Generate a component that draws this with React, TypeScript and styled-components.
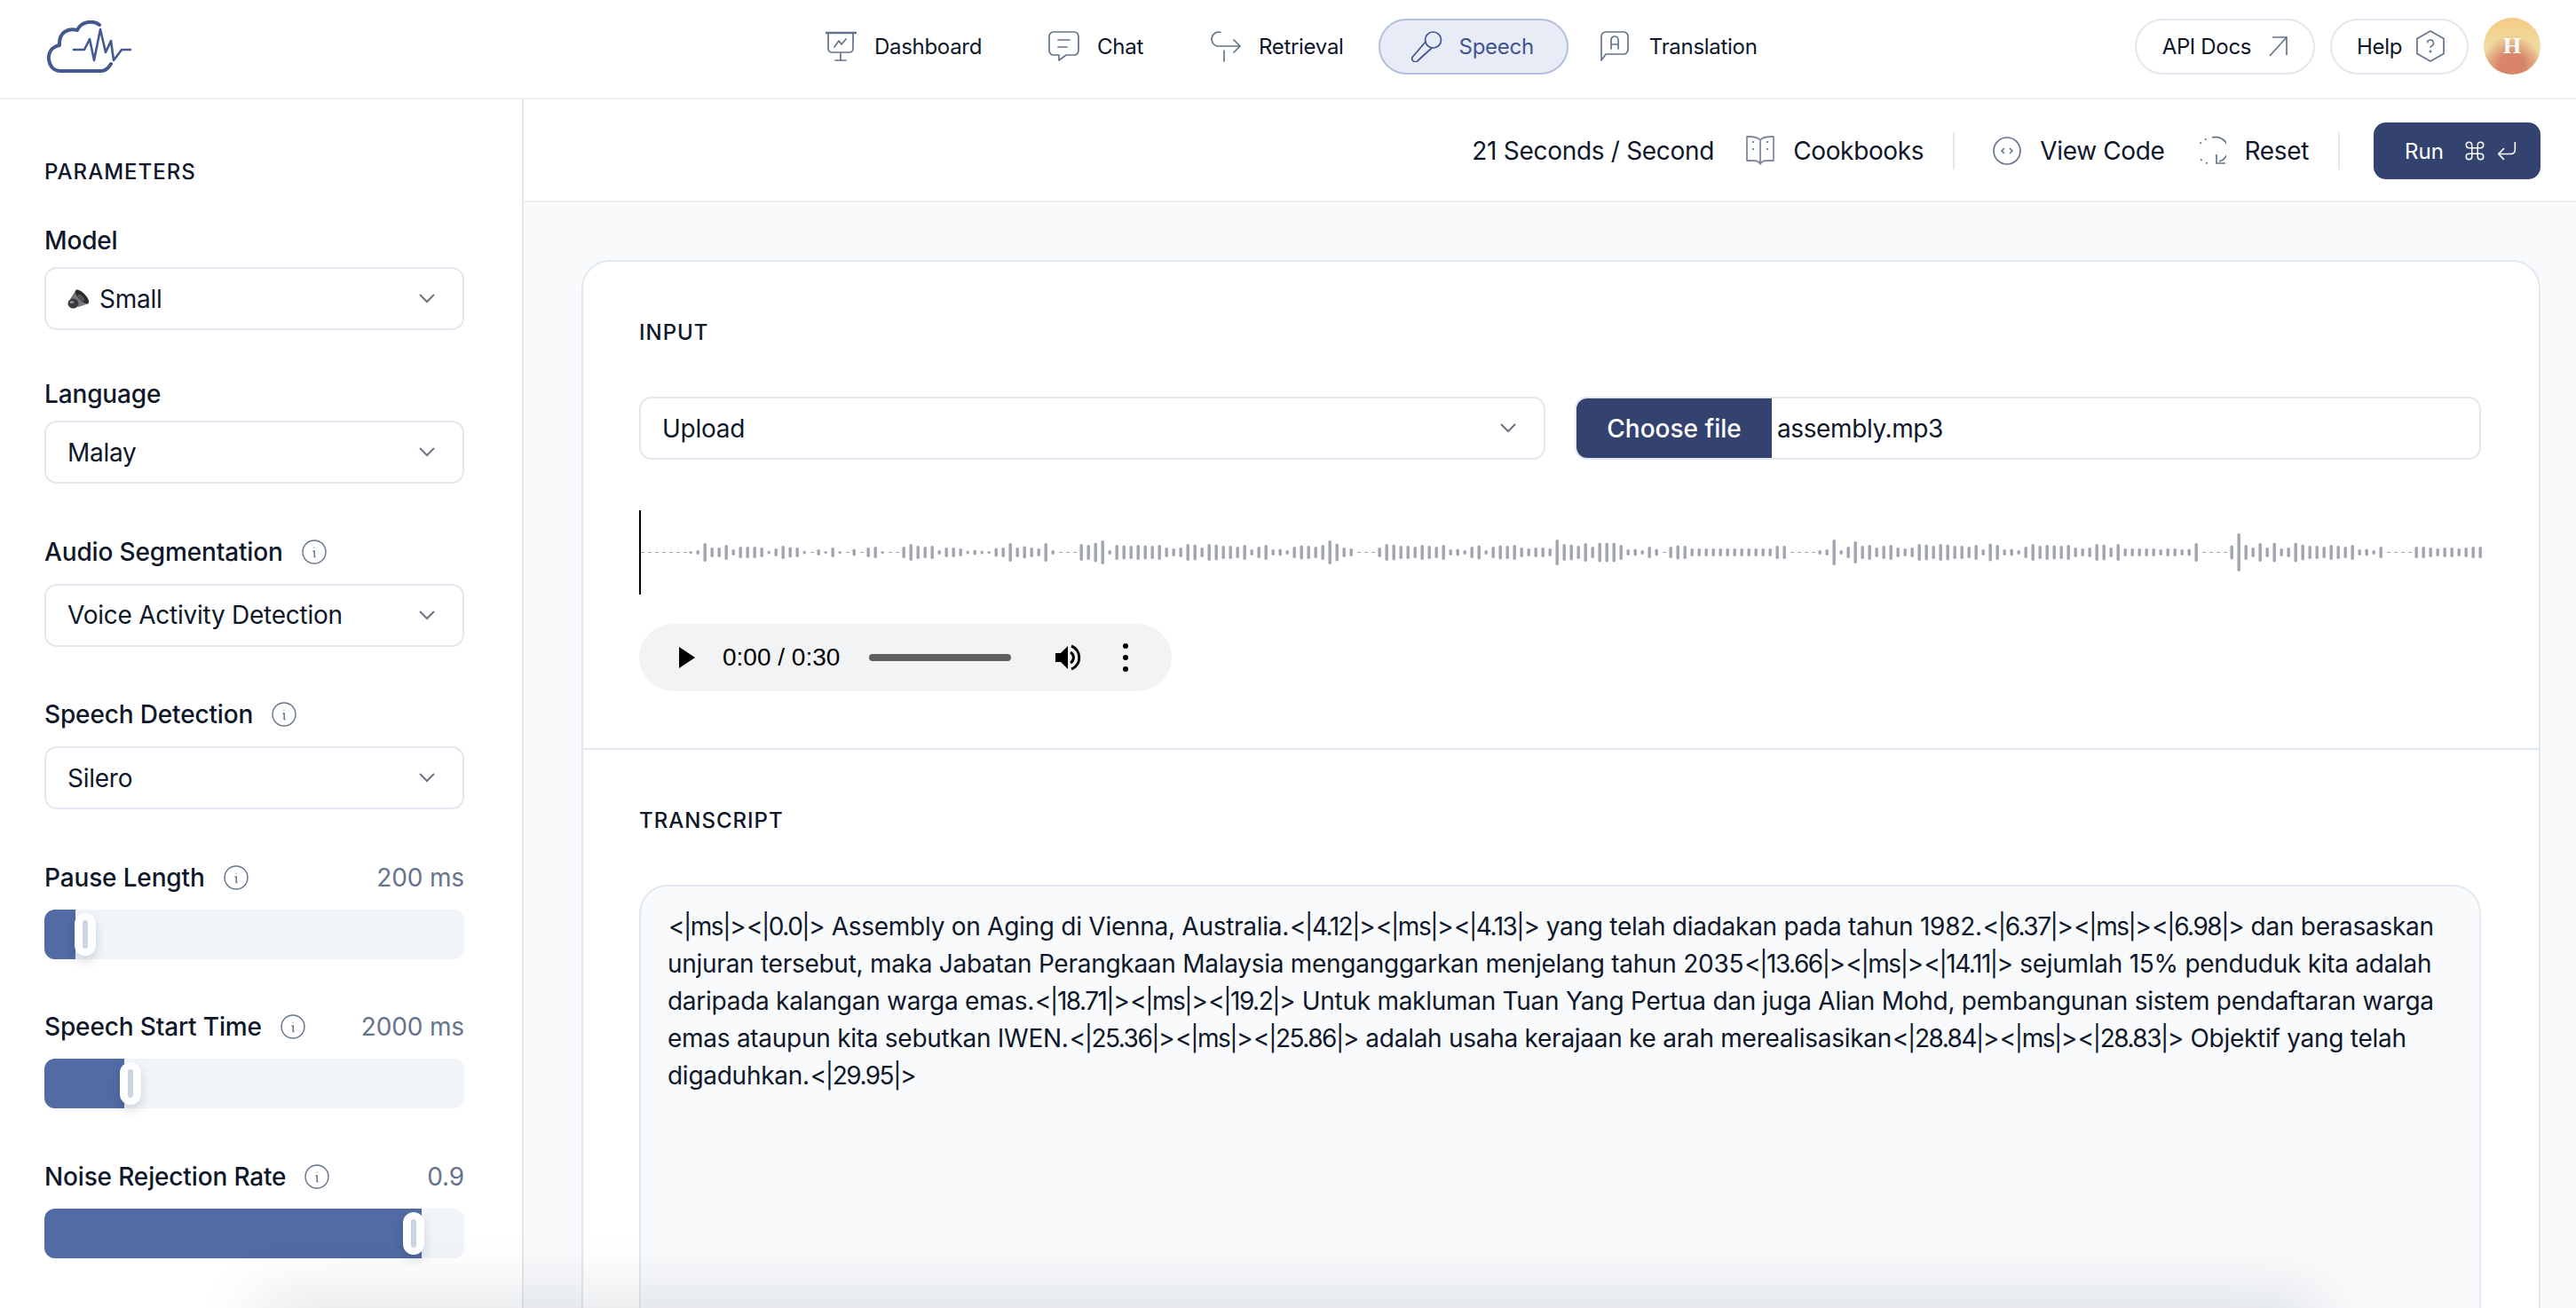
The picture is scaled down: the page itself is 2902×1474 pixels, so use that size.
import styled, { createGlobalStyle } from 'styled-components';
import { Command, CornerDownLeft } from 'lucide-react';

const GlobalStyles = createGlobalStyle`
  html, body, #root {
    margin: 0;
    height: 100%;
    overflow: hidden;
  }
  body {
    font-family: Inter, "Liberation Sans", sans-serif;
    color: #0f172a;
    background: #fff;
  }
  * { box-sizing: border-box; }
`;

const NAV_ITEMS = ['Dashboard', 'Chat', 'Retrieval', 'Speech', 'Translation'];

const PARAM_SLIDERS = [
  { label: 'Pause Length', value: '200 ms', fill: 35, thumb: 34 },
  { label: 'Speech Start Time', value: '2000 ms', fill: 90, thumb: 85 },
  { label: 'Noise Rejection Rate', value: '0.9', fill: 425, thumb: 404 },
];

const TRANSCRIPT = `<|ms|><|0.0|> Assembly on Aging di Vienna, Australia.<|4.12|><|ms|><|4.13|> yang telah diadakan pada tahun 1982.<|6.37|><|ms|><|6.98|> dan berasaskan
unjuran tersebut, maka Jabatan Perangkaan Malaysia menganggarkan menjelang tahun 2035<|13.66|><|ms|><|14.11|> sejumlah 15% penduduk kita adalah
daripada kalangan warga emas.<|18.71|><|ms|><|19.2|> Untuk makluman Tuan Yang Pertua dan juga Alian Mohd, pembangunan sistem pendaftaran warga
emas ataupun kita sebutkan IWEN.<|25.36|><|ms|><|25.86|> adalah usaha kerajaan ke arah merealisasikan<|28.84|><|ms|><|28.83|> Objektif yang telah
digaduhkan.<|29.95|>`;

// first stretch read off the reference, the rest follows its quiet spots and peaks
const WAVE_START = [3, 5, 21, 11, 11, 17, 7, 13, 13, 13, 11, 4, 9, 15, 12, 11, 4, 0, 7, 3, 11, 3, 0, 8, 0, 11, 13, 3, 0, 0, 13, 19, 15, 13, 15, 5, 11, 11, 9, 4, 6, 4, 3, 10, 11, 21, 11, 14, 11, 9, 21, 5, 0];
const WAVE_QUIET = [[1202, 1212], [1528, 1549], [1872, 1880], [2014, 2049], [2482, 2509], [2689, 2716]];
const WAVE_LOW = [[2390, 2459], [1900, 2000]];
const WAVE_PEAKS: Record<number, number> = { 1218: 19, 1234: 22, 1242: 27, 1258: 17, 1490: 17, 1498: 27, 1506: 20, 1754: 29, 1786: 21, 1802: 22, 1810: 22, 1818: 22, 2066: 29, 2090: 25, 2242: 20, 2290: 19, 2474: 21, 2522: 43, 2546: 21, 2562: 22, 2586: 22 };
const WAVE_CYCLE = [15, 11, 17, 13, 7, 15, 19, 11, 16, 8, 13, 18, 9, 15, 5, 17];

const waveBars = Array.from({ length: 253 }, (_, i) => {
  if (i < WAVE_START.length) return WAVE_START[i];
  const x = 778 + i * 8;
  const peak = Object.keys(WAVE_PEAKS).find(p => Math.abs(Number(p) - x) <= 4);
  if (peak) return WAVE_PEAKS[Number(peak)];
  if (WAVE_QUIET.some(([a, b]) => x >= a && x <= b)) return 0;
  const h = WAVE_CYCLE[(i * 5 + (i >> 3)) % WAVE_CYCLE.length];
  if (WAVE_LOW.some(([a, b]) => x >= a && x <= b)) return Math.min(h, 9);
  if (x > 2720) return Math.min(h, 13);
  return h;
});

const Logo = () => (
  <svg width="96" height="59" viewBox="0 0 96 59" fill="none" stroke="#44598f" strokeLinejoin="round" strokeLinecap="round">
    <path strokeWidth="4" d="M60 5C54 0 40 0 35 11C24 8 14 14 15 28C5 30 2 38 3 44C4 52 9 57 15 57H62C67 57 70 54 73 49" />
    <path strokeWidth="2.6" d="M31 33H43L49 21L54 45L61 10L67 36L73 23L76 45L85 33H95" />
  </svg>
);

const NavIcon = ({ name, color }: { name: string; color: string }) => {
  const shapes: Record<string, JSX.Element> = {
    Dashboard: (
      <>
        <path strokeWidth="2.4" d="M0 2H34" />
        <path d="M3 2V20a4 4 0 0 0 4 4H27a4 4 0 0 0 4-4V2M17 24V32M11 33H23" />
        <path d="M10 18L15 11L18 15L23 9" />
      </>
    ),
    Chat: (
      <>
        <path d="M6 1H29a5 5 0 0 1 5 5V22a5 5 0 0 1-5 5H20L12 33V27H6a5 5 0 0 1-5-5V6a5 5 0 0 1 5-5Z" />
        <path d="M11 10H24M11 18H21" />
      </>
    ),
    Retrieval: (
      <>
        <path d="M12 1.5A8 8 0 1 0 8 17H34M27 10L34 17L27 24M16 22V34" />
      </>
    ),
    Speech: (
      <>
        <circle cx="25.5" cy="10" r="9" />
        <path d="M17 12L2.5 29a3.6 3.6 0 0 0 5.6 4.5L24 19" />
      </>
    ),
    Translation: (
      <>
        <path d="M1 33V6a5 5 0 0 1 5-5H26a5 5 0 0 1 5 5V21a5 5 0 0 1-5 5H6Z" />
        <path d="M12 20V10a4 4 0 0 1 8 0V20M12 15H20" />
      </>
    ),
  };
  return (
    <svg width="36" height="35" viewBox="0 0 36 35" fill="none" stroke={color} strokeWidth="1.7" strokeLinecap="round" strokeLinejoin="round">
      {shapes[name]}
    </svg>
  );
};

const ArrowOut = () => (
  <svg width="22" height="32" viewBox="0 0 22 32" fill="none" stroke="#64748b" strokeWidth="1.7">
    <path d="M1 27L20 6M4 6H20V26" />
  </svg>
);

const HexHelp = () => (
  <svg width="32" height="36" viewBox="0 0 32 36" fill="none" stroke="#64748b" strokeWidth="1.7" strokeLinejoin="round">
    <path d="M16 1L31 9.5V26.5L16 35L1 26.5V9.5Z" />
    <path strokeWidth="1.5" d="M12.5 14.5a3.5 3.5 0 1 1 5 3.2c-1 .6-1.5 1-1.5 2.3" />
    <circle cx="16" cy="24" r="0.6" />
  </svg>
);

const BookIcon = () => (
  <svg width="32" height="34" viewBox="0 0 32 34" fill="none" stroke="#7e8ca3" strokeWidth="1.8" strokeLinejoin="round">
    <path d="M16 5C14 2 11 1 3 1H1V28H8C12 28 15 29 16 32C17 29 20 28 24 28H31V1H29C21 1 18 2 16 5ZM16 5V32" />
    <path strokeWidth="2" strokeDasharray="2 6" d="M8 6V22M24 6V22" />
  </svg>
);

const CodeIcon = () => (
  <svg width="32" height="34" viewBox="0 0 32 34" fill="none" stroke="#64748b" strokeWidth="1.7">
    <circle cx="16" cy="17" r="15" />
    <path strokeWidth="1.6" d="M13 14L10 17L13 20M19 14L22 17L19 20" />
  </svg>
);

const ResetIcon = () => (
  <svg width="30" height="34" viewBox="0 0 30 34" fill="none" stroke="#64748b" strokeWidth="1.7">
    <path d="M14 2A14 14 0 0 1 22 29" />
    <path d="M19 21V31H29" />
    <path strokeWidth="1.8" strokeDasharray="0.5 6.5" strokeLinecap="round" d="M7 4A14 14 0 0 0 14 31" />
  </svg>
);

const Chevron = () => (
  <svg width="18" height="11" viewBox="0 0 18 11" fill="none" stroke="#6b7280" strokeWidth="2">
    <path d="M1 1L9 9L17 1" />
  </svg>
);

const InfoIcon = () => (
  <svg width="28" height="28" viewBox="0 0 28 28" fill="none" stroke="#64748b" strokeWidth="1.4">
    <circle cx="14" cy="14" r="13" />
    <path strokeWidth="1.5" d="M12.5 13H14.2V19.5H15.5M14 8.8V9.6" />
  </svg>
);

const SpeakerEmoji = () => (
  <svg width="25" height="24" viewBox="0 0 25 24">
    <path d="M3 12L10 1C17 2 23 9 24 17L12 21Z" fill="#77787c" />
    <ellipse cx="16.5" cy="9.5" rx="10" ry="4" transform="rotate(45 16.5 9.5)" fill="#2b2b2d" />
    <ellipse cx="15.5" cy="10.5" rx="5" ry="2" transform="rotate(45 15.5 10.5)" fill="#55565a" />
    <ellipse cx="6.5" cy="17" rx="6" ry="5.5" fill="#3a3a3c" />
    <ellipse cx="5" cy="15.5" rx="2.4" ry="1.6" fill="#8d8e92" />
  </svg>
);

const Waveform = () => (
  <svg width="2076" height="95" viewBox="0 0 2076 95">
    <rect x="0" y="0" width="2" height="95" fill="#000" />
    {[0, 1, 2, 3, 4, 5, 6].map(i => (
      <rect key={i} x={2 + i * 8} y="47" width="4" height="1" fill="#a1a5b0" />
    ))}
    {waveBars.map((h, i) => (
      h === 0
        ? <rect key={i} x={57 + i * 8} y="47" width="4" height="1" fill="#a1a5b0" />
        : <rect key={i} x={56.5 + i * 8} y={47.5 - h / 2} width="3.4" height={h} rx="1.7" fill="#a1a5b0" />
    ))}
  </svg>
);

function App() {
  return (
    <>
      <GlobalStyles />
      <Page>
        <Header>
          <LogoCell><Logo /></LogoCell>
          <Nav>
            {NAV_ITEMS.map(item => (
              <NavItem key={item} $active={item === 'Speech'}>
                <NavIcon name={item} color={item === 'Speech' ? '#3f5590' : '#64748b'} />
                {item}
              </NavItem>
            ))}
          </Nav>
          <HeaderActions>
            <PillButton>API Docs <ArrowOut /></PillButton>
            <PillButton $narrow>Help <HexHelp /></PillButton>
            <Avatar>H</Avatar>
          </HeaderActions>
        </Header>

        <Body>
          <Sidebar>
            <SidebarTitle>PARAMETERS</SidebarTitle>
            <Field $first $plain>
              <FieldLabel $plain>Model</FieldLabel>
              <Select><SelectValue><SpeakerEmoji /> Small</SelectValue><Chevron /></Select>
            </Field>
            <Field $plain>
              <FieldLabel $plain>Language</FieldLabel>
              <Select><SelectValue>Malay</SelectValue><Chevron /></Select>
            </Field>
            <Field>
              <FieldLabel>Audio Segmentation <InfoIcon /></FieldLabel>
              <Select><SelectValue>Voice Activity Detection</SelectValue><Chevron /></Select>
            </Field>
            <Field>
              <FieldLabel>Speech Detection <InfoIcon /></FieldLabel>
              <Select><SelectValue>Silero</SelectValue><Chevron /></Select>
            </Field>
            {PARAM_SLIDERS.map(s => (
              <Field key={s.label}>
                <FieldLabel>
                  {s.label} <InfoIcon />
                  <FieldValue>{s.value}</FieldValue>
                </FieldLabel>
                <Track>
                  <TrackFill style={{ width: s.fill }} />
                  <Thumb style={{ left: s.thumb }} />
                </Track>
              </Field>
            ))}
          </Sidebar>

          <Main>
            <Toolbar>
              <Stat>21 Seconds / Second</Stat>
              <ToolItem><BookIcon /> Cookbooks</ToolItem>
              <ToolDivider $after={43} />
              <ToolItem><CodeIcon /> View Code</ToolItem>
              <ToolItem $spaced><ResetIcon /> Reset</ToolItem>
              <ToolDivider $after={38} />
              <RunButton>
                Run
                <Keys>
                  <Command size={26} strokeWidth={1.4} />
                  <CornerDownLeft size={28} strokeWidth={1.4} />
                </Keys>
              </RunButton>
            </Toolbar>

            <Content>
              <Card>
                <CardSection>
                  <SectionTitle>INPUT</SectionTitle>
                  <InputRow>
                    <Select><SelectValue>Upload</SelectValue><Chevron /></Select>
                    <FileInput>
                      <ChooseFile>Choose file</ChooseFile>
                      <FileName>assembly.mp3</FileName>
                    </FileInput>
                  </InputRow>
                  <WaveRow><Waveform /></WaveRow>
                  <Player>
                    <svg width="18" height="24" viewBox="0 0 18 24"><path d="M0 0L18 12L0 24Z" fill="#000" /></svg>
                    <PlayerTime>0:00 / 0:30</PlayerTime>
                    <PlayerBar />
                    <svg width="32" height="30" viewBox="0 0 32 30" fill="none">
                      <path d="M0 10H6L14 2V28L6 20H0Z" fill="#000" />
                      <path d="M17 9a7 7 0 0 1 0 12" stroke="#000" strokeWidth="3" />
                      <path d="M18 2a14 14 0 0 1 0 26" stroke="#000" strokeWidth="3" />
                    </svg>
                    <PlayerDots><i /><i /><i /></PlayerDots>
                  </Player>
                </CardSection>
                <CardSection $last>
                  <SectionTitle>TRANSCRIPT</SectionTitle>
                  <TranscriptBox>
                    {TRANSCRIPT.split(/(<\|[^|]*\|>)/).map((part, i) => (
                      i % 2 ? <Token key={i}>{part}</Token> : part
                    ))}
                  </TranscriptBox>
                </CardSection>
              </Card>
            </Content>
          </Main>
        </Body>
        <BottomShade />
      </Page>
    </>
  );
}

export default App;

const Page = styled.div`
  height: 100vh;
  display: flex;
  flex-direction: column;
  overflow: hidden;
`;

const Header = styled.header`
  flex: none;
  height: 112px;
  display: grid;
  grid-template-columns: 842px auto 1fr;
  align-items: center;
  padding: 0 40px 6px 52px;
  border-bottom: 2px solid #eceef1;
`;

const LogoCell = styled.div`
  display: flex;
  align-items: center;
`;

const Nav = styled.nav`
  display: flex;
  align-items: center;
`;

const NavItem = styled.div<{ $active?: boolean }>`
  height: 63px;
  display: flex;
  align-items: center;
  gap: 19px;
  padding: 0 37px 0 34px;
  font-size: 24px;
  letter-spacing: -0.3px;
  border-radius: 32px;
  border: 2px solid ${p => (p.$active ? '#b3c1e0' : 'transparent')};
  background: ${p => (p.$active ? '#e8ecf6' : 'transparent')};
  color: ${p => (p.$active ? '#3f5590' : '#0f172a')};
`;

const HeaderActions = styled.div`
  display: flex;
  align-items: center;
  justify-content: flex-end;
  gap: 17px;
`;

const PillButton = styled.div<{ $narrow?: boolean }>`
  height: 63px;
  display: flex;
  align-items: center;
  gap: ${p => (p.$narrow ? 16 : 20)}px;
  padding: 0 ${p => (p.$narrow ? 25 : 28)}px 0 ${p => (p.$narrow ? 28 : 29)}px;
  border: 2px solid #e2e8f0;
  border-radius: 32px;
  font-size: 24px;
  letter-spacing: -0.35px;
`;

const Avatar = styled.div`
  width: 64px;
  height: 64px;
  border-radius: 50%;
  display: flex;
  align-items: center;
  justify-content: center;
  background: radial-gradient(circle at 50% 85%, #d8856a 0 22%, transparent 55%), linear-gradient(180deg, #f5cb84 0%, #efdca2 55%, #e6b98a 100%);
  color: #fff;
  font-family: "Liberation Serif", serif;
  font-size: 26px;
  font-weight: 700;
`;

const Body = styled.div`
  flex: 1;
  min-height: 0;
  display: flex;
`;

const Sidebar = styled.aside`
  flex: none;
  width: 590px;
  padding: 67px 65px 0 50px;
  border-right: 2px solid #e2e8f0;
`;

const SidebarTitle = styled.h2`
  margin: 0;
  font-size: 24px;
  line-height: 30px;
  font-weight: 500;
  letter-spacing: 1px;
`;

const Field = styled.div<{ $first?: boolean; $plain?: boolean }>`
  margin-top: ${p => (p.$first ? 42 : p.$plain ? 52 : 57.5)}px;
`;

const FieldLabel = styled.div<{ $plain?: boolean }>`
  height: ${p => (p.$plain ? 40 : 38)}px;
  margin-bottom: ${p => (p.$plain ? 10 : 17)}px;
  display: flex;
  align-items: center;
  gap: 21px;
  font-size: 28px;
  font-weight: 500;
  letter-spacing: -0.15px;
`;

const FieldValue = styled.span`
  margin-left: auto;
  font-weight: 400;
  color: #64748b;
`;

const Select = styled.div`
  height: 71px;
  display: flex;
  align-items: center;
  justify-content: space-between;
  padding: 0 31px 0 24px;
  border: 2px solid #e2e8f0;
  border-radius: 14px;
  background: #fff;
`;

const SelectValue = styled.span`
  display: flex;
  align-items: center;
  gap: 11px;
  font-size: 28px;
  letter-spacing: -0.25px;
`;

const Track = styled.div`
  position: relative;
  height: 56px;
  border-radius: 12px;
  background: #f1f5f9;
`;

const TrackFill = styled.div`
  height: 100%;
  border-radius: 12px 0 0 12px;
  background: #526ba5;
`;

const Thumb = styled.div`
  position: absolute;
  top: 4px;
  width: 24px;
  height: 48px;
  border-radius: 12px;
  background: #fff;
  box-shadow: 0 6px 12px rgba(15, 23, 42, 0.16);
  &::after {
    content: '';
    position: absolute;
    left: 9px;
    top: 8px;
    width: 6px;
    height: 32px;
    border-radius: 3px;
    background: #cbd5e1;
  }
`;

const Main = styled.main`
  flex: 1;
  min-width: 0;
  display: flex;
  flex-direction: column;
`;

const Toolbar = styled.div`
  flex: none;
  height: 116px;
  display: flex;
  align-items: center;
  justify-content: flex-end;
  padding: 2px 40px 0 0;
  border-bottom: 2px solid #eceef1;
`;

const Stat = styled.span`
  font-size: 28px;
  letter-spacing: -0.3px;
  margin-right: 36px;
`;

const ToolItem = styled.div<{ $spaced?: boolean }>`
  display: flex;
  align-items: center;
  gap: 21px;
  font-size: 28px;
  letter-spacing: -0.35px;
  margin-left: ${p => (p.$spaced ? 39 : 0)}px;
`;

const ToolDivider = styled.div<{ $after: number }>`
  width: 2px;
  height: 42px;
  margin: 0 ${p => p.$after}px 0 33px;
  background: #e2e8f0;
`;

const RunButton = styled.div`
  width: 188px;
  height: 64px;
  display: flex;
  align-items: center;
  gap: 22px;
  padding-left: 35px;
  border-radius: 14px;
  background: #33426f;
  color: #fff;
  font-size: 24px;
`;

const Keys = styled.span`
  display: flex;
  align-items: center;
  gap: 9px;
`;

const Content = styled.div`
  flex: 1;
  min-height: 0;
  overflow: hidden;
  background: #f8fafc;
  padding: 65px 40px 0 65px;
`;

const Card = styled.section`
  border: 2px solid #e2e8f0;
  border-radius: 32px 32px 0 0;
  background: #fff;
`;

const CardSection = styled.div<{ $last?: boolean }>`
  padding: 65px 65px ${p => (p.$last ? 0 : 64)}px 63px;
  border-bottom: ${p => (p.$last ? 'none' : '2px solid #e2e8f0')};
`;

const SectionTitle = styled.h3`
  margin: 0 0 57px;
  font-size: 24px;
  line-height: 30px;
  font-weight: 500;
  letter-spacing: 1px;
`;

const InputRow = styled.div`
  display: grid;
  grid-template-columns: 1fr 1fr;
  gap: 33px;
`;

const FileInput = styled.div`
  height: 71px;
  display: flex;
  align-items: center;
  border: 2px solid #e2e8f0;
  border-radius: 14px;
  overflow: hidden;
`;

const ChooseFile = styled.div`
  height: 100%;
  width: 220px;
  display: flex;
  align-items: center;
  justify-content: center;
  background: #33426f;
  color: #fff;
  font-size: 28px;
  font-weight: 500;
`;

const FileName = styled.span`
  margin-left: 6px;
  font-size: 28px;
  letter-spacing: -0.4px;
`;

const WaveRow = styled.div`
  margin-top: 57px;
  height: 95px;
  svg { display: block; }
`;

const Player = styled.div`
  margin-top: 33px;
  width: 600px;
  height: 76px;
  display: flex;
  align-items: center;
  padding-left: 45px;
  border-radius: 38px;
  background: #f1f3f4;
`;

const PlayerTime = styled.span`
  margin-left: 31px;
  font-family: "Liberation Sans", sans-serif;
  font-size: 28px;
  color: #000;
`;

const PlayerBar = styled.div`
  width: 160px;
  height: 8px;
  margin: 0 50px 0 33px;
  border-radius: 4px;
  background: #5f5f5f;
`;

const PlayerDots = styled.div`
  margin-left: 44px;
  display: flex;
  flex-direction: column;
  gap: 7px;
  i {
    display: block;
    width: 6px;
    height: 6px;
    border-radius: 50%;
    background: #000;
  }
`;

const TranscriptBox = styled.div`
  height: 700px;
  padding: 24px 30px;
  border: 2px solid #e2e8f0;
  border-radius: 32px;
  background: #f8fafc;
  font-size: 28px;
  line-height: 42px;
  letter-spacing: -0.27px;
  white-space: pre-line;
`;

const Token = styled.span`
  margin: 0 1px;
  letter-spacing: -1.5px;
`;

const BottomShade = styled.div`
  position: fixed;
  left: 300px;
  right: 300px;
  bottom: -60px;
  height: 60px;
  box-shadow: 0 0 80px 6px rgba(15, 23, 42, 0.14);
`;
